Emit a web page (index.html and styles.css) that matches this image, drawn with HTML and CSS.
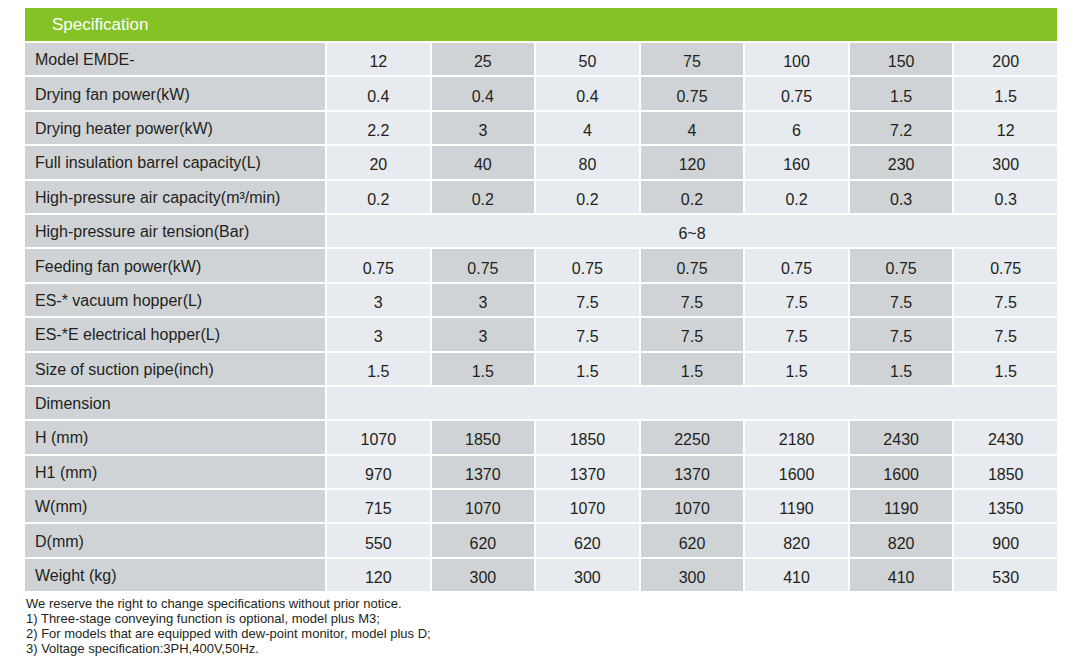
FILE: index.html
```html
<!DOCTYPE html>
<html>
<head>
<meta charset="utf-8">
<link rel="stylesheet" href="styles.css">
</head>
<body>
<div class="page">
  <div class="title">Specification</div>
  <div class="spec">
    <div class="lbl">Model EMDE-</div>
    <div class="c l">12</div><div class="c d">25</div><div class="c l">50</div><div class="c d">75</div><div class="c l">100</div><div class="c d">150</div><div class="c l">200</div>

    <div class="lbl">Drying fan power(kW)</div>
    <div class="c l">0.4</div><div class="c d">0.4</div><div class="c l">0.4</div><div class="c d">0.75</div><div class="c l">0.75</div><div class="c d">1.5</div><div class="c l">1.5</div>

    <div class="lbl">Drying heater power(kW)</div>
    <div class="c l">2.2</div><div class="c d">3</div><div class="c l">4</div><div class="c d">4</div><div class="c l">6</div><div class="c d">7.2</div><div class="c l">12</div>

    <div class="lbl">Full insulation barrel capacity(L)</div>
    <div class="c l">20</div><div class="c d">40</div><div class="c l">80</div><div class="c d">120</div><div class="c l">160</div><div class="c d">230</div><div class="c l">300</div>

    <div class="lbl">High-pressure air capacity(m³/min)</div>
    <div class="c l">0.2</div><div class="c d">0.2</div><div class="c l">0.2</div><div class="c d">0.2</div><div class="c l">0.2</div><div class="c d">0.3</div><div class="c l">0.3</div>

    <div class="lbl">High-pressure air tension(Bar)</div>
    <div class="c l span">6~8</div>

    <div class="lbl">Feeding fan power(kW)</div>
    <div class="c l">0.75</div><div class="c d">0.75</div><div class="c l">0.75</div><div class="c d">0.75</div><div class="c l">0.75</div><div class="c d">0.75</div><div class="c l">0.75</div>

    <div class="lbl">ES-* vacuum hopper(L)</div>
    <div class="c l">3</div><div class="c d">3</div><div class="c l">7.5</div><div class="c d">7.5</div><div class="c l">7.5</div><div class="c d">7.5</div><div class="c l">7.5</div>

    <div class="lbl">ES-*E electrical hopper(L)</div>
    <div class="c l">3</div><div class="c d">3</div><div class="c l">7.5</div><div class="c d">7.5</div><div class="c l">7.5</div><div class="c d">7.5</div><div class="c l">7.5</div>

    <div class="lbl">Size of suction pipe(inch)</div>
    <div class="c l">1.5</div><div class="c d">1.5</div><div class="c l">1.5</div><div class="c d">1.5</div><div class="c l">1.5</div><div class="c d">1.5</div><div class="c l">1.5</div>

    <div class="lbl">Dimension</div>
    <div class="c l span"></div>

    <div class="lbl">H (mm)</div>
    <div class="c l">1070</div><div class="c d">1850</div><div class="c l">1850</div><div class="c d">2250</div><div class="c l">2180</div><div class="c d">2430</div><div class="c l">2430</div>

    <div class="lbl">H1 (mm)</div>
    <div class="c l">970</div><div class="c d">1370</div><div class="c l">1370</div><div class="c d">1370</div><div class="c l">1600</div><div class="c d">1600</div><div class="c l">1850</div>

    <div class="lbl">W(mm)</div>
    <div class="c l">715</div><div class="c d">1070</div><div class="c l">1070</div><div class="c d">1070</div><div class="c l">1190</div><div class="c d">1190</div><div class="c l">1350</div>

    <div class="lbl">D(mm)</div>
    <div class="c l">550</div><div class="c d">620</div><div class="c l">620</div><div class="c d">620</div><div class="c l">820</div><div class="c d">820</div><div class="c l">900</div>

    <div class="lbl">Weight (kg)</div>
    <div class="c l">120</div><div class="c d">300</div><div class="c l">300</div><div class="c d">300</div><div class="c l">410</div><div class="c d">410</div><div class="c l">530</div>
  </div>
  <div class="notes">
    <p>We reserve the right to change specifications without prior notice.</p>
    <p>1) Three-stage conveying function is optional, model plus M3;</p>
    <p>2) For models that are equipped with dew-point monitor, model plus D;</p>
    <p>3) Voltage specification:3PH,400V,50Hz.</p>
  </div>
</div>
</body>
</html>
```

FILE: styles.css
```css
html, body {
  margin: 0;
  padding: 0;
  background: #ffffff;
}

body {
  font-family: "Liberation Sans", Arial, sans-serif;
  color: #231f20;
}

.page {
  width: 1032px;
  padding: 8px 0 0 25px;
}

.title {
  height: 33px;
  background: #84c225;
  color: #ffffff;
  font-size: 17px;
  line-height: 33px;
  padding-left: 27px;
  margin-bottom: 2px;
}

.spec {
  display: grid;
  grid-template-columns: 300px repeat(7, 1fr);
  grid-auto-rows: 32.4px;
  gap: 2px;
}

.lbl {
  background: #cfd3d6;
  font-size: 16px;
  padding: 2px 0 0 10px;
  display: flex;
  align-items: center;
}

.c {
  font-size: 16px;
  display: flex;
  align-items: center;
  justify-content: center;
  padding-top: 6px;
}

.c.l {
  background: #e7eaee;
}

.c.d {
  background: #cfd3d6;
}

.c.span {
  grid-column: span 7;
}

.notes {
  margin-top: 6px;
  padding-left: 1px;
  font-size: 13px;
  line-height: 14.8px;
}

.notes p {
  margin: 0;
}
```
